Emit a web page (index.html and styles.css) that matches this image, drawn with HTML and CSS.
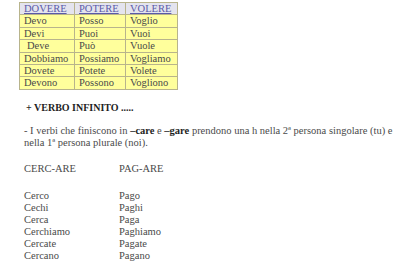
FILE: index.html
```html
<!DOCTYPE html>
<html>
<head>
<meta charset="utf-8">
<link rel="stylesheet" href="styles.css">
</head>
<body>
<div class="page">
  <table class="verbs">
    <tr class="head"><th class="c1">DOVERE</th><th class="c2">POTERE</th><th class="c3">VOLERE</th></tr>
    <tr><td>Devo</td><td>Posso</td><td>Voglio</td></tr>
    <tr><td>Devi</td><td>Puoi</td><td>Vuoi</td></tr>
    <tr><td><span class="ind">Deve</span></td><td>Può</td><td>Vuole</td></tr>
    <tr><td>Dobbiamo</td><td>Possiamo</td><td>Vogliamo</td></tr>
    <tr><td>Dovete</td><td>Potete</td><td>Volete</td></tr>
    <tr><td>Devono</td><td>Possono</td><td>Vogliono</td></tr>
  </table>
  <div class="text">
    <p class="title">+ VERBO INFINITO .....</p>
    <p class="para">- I verbi che finiscono in <b class="bold">–care</b> e <b class="bold">–gare</b> prendono una h nella 2ª persona singolare (tu) e nella 1ª persona plurale (noi).</p>
    <div class="cols">
      <div class="col">
        <p class="colhead">CERC-ARE</p>
        <p>Cerco</p><p>Cechi</p><p>Cerca</p><p>Cerchiamo</p><p>Cercate</p><p>Cercano</p>
      </div>
      <div class="col">
        <p class="colhead">PAG-ARE</p>
        <p>Pago</p><p>Paghi</p><p>Paga</p><p>Paghiamo</p><p>Pagate</p><p>Pagano</p>
      </div>
    </div>
  </div>
</div>
</body>
</html>
```
FILE: styles.css
```css
html, body {
  margin: 0;
  padding: 0;
  background: #ffffff;
}
.page {
  font-family: "Liberation Serif", "Times New Roman", serif;
  font-size: 10.5px;
  color: #4a4a4a;
  padding-top: 2px;
}
.verbs {
  margin-left: 19px;
  border-collapse: collapse;
  table-layout: fixed;
  width: 157px;
  background: #ffff9c;
}
.verbs th, .verbs td {
  border: 1px solid #b8b48c;
  padding: 0 0 0 4px;
  height: 11.4px;
  line-height: 11.4px;
  text-align: left;
  font-weight: normal;
  white-space: nowrap;
  overflow: hidden;
}
.verbs .c1 { width: 50px; }
.verbs .c2 { width: 46px; }
.verbs .c3 { width: 47px; }
.verbs .head th {
  background: #e4e4ee;
  color: #5a5aa8;
  text-decoration: underline;
}
.ind { padding-left: 3px; }
.text {
  padding-left: 24px;
}
.text p {
  margin: 0;
}
.title {
  margin-top: 12px !important;
  padding-left: 2px;
  font-size: 10px;
  font-weight: bold;
  color: #1e1e1e;
  line-height: 12px;
}
.para {
  margin-top: 11px !important;
  line-height: 12.5px;
  width: 376px;
}
.bold {
  font-weight: bold;
  color: #1e1e1e;
}
.cols {
  display: flex;
  margin-top: 13px;
}
.col {
  width: 95px;
  line-height: 12px;
}
.colhead {
  margin-bottom: 15px !important;
}
```
